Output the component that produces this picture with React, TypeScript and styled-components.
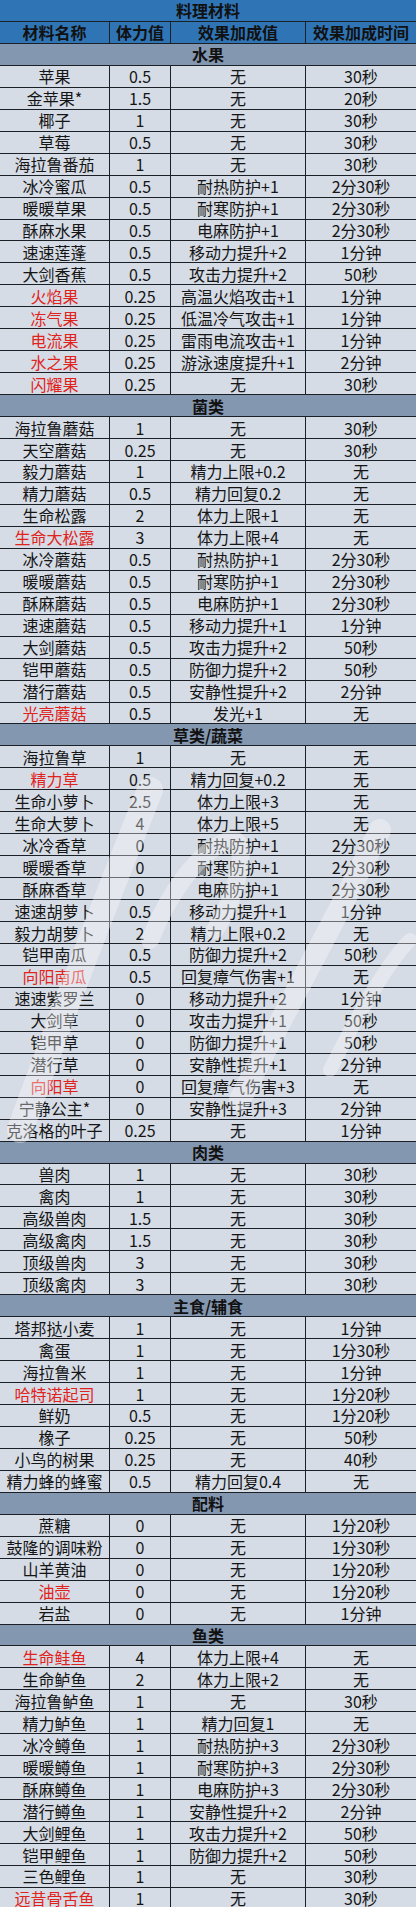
import React from "react";
import styled, { createGlobalStyle } from "styled-components";

type Item = [string, string, string, string, boolean?];
type Group = { title: string; items: Item[] };

const groups: Group[] = [
  {
    title: "水果",
    items: [
      ["苹果", "0.5", "无", "30秒"],
      ["金苹果*", "1.5", "无", "20秒"],
      ["椰子", "1", "无", "30秒"],
      ["草莓", "0.5", "无", "30秒"],
      ["海拉鲁番茄", "1", "无", "30秒"],
      ["冰冷蜜瓜", "0.5", "耐热防护+1", "2分30秒"],
      ["暖暖草果", "0.5", "耐寒防护+1", "2分30秒"],
      ["酥麻水果", "0.5", "电麻防护+1", "2分30秒"],
      ["速速莲蓬", "0.5", "移动力提升+2", "1分钟"],
      ["大剑香蕉", "0.5", "攻击力提升+2", "50秒"],
      ["火焰果", "0.25", "高温火焰攻击+1", "1分钟", true],
      ["冻气果", "0.25", "低温冷气攻击+1", "1分钟", true],
      ["电流果", "0.25", "雷雨电流攻击+1", "1分钟", true],
      ["水之果", "0.25", "游泳速度提升+1", "2分钟", true],
      ["闪耀果", "0.25", "无", "30秒", true],
    ],
  },
  {
    title: "菌类",
    items: [
      ["海拉鲁蘑菇", "1", "无", "30秒"],
      ["天空蘑菇", "0.25", "无", "30秒"],
      ["毅力蘑菇", "1", "精力上限+0.2", "无"],
      ["精力蘑菇", "0.5", "精力回复0.2", "无"],
      ["生命松露", "2", "体力上限+1", "无"],
      ["生命大松露", "3", "体力上限+4", "无", true],
      ["冰冷蘑菇", "0.5", "耐热防护+1", "2分30秒"],
      ["暖暖蘑菇", "0.5", "耐寒防护+1", "2分30秒"],
      ["酥麻蘑菇", "0.5", "电麻防护+1", "2分30秒"],
      ["速速蘑菇", "0.5", "移动力提升+1", "1分钟"],
      ["大剑蘑菇", "0.5", "攻击力提升+2", "50秒"],
      ["铠甲蘑菇", "0.5", "防御力提升+2", "50秒"],
      ["潜行蘑菇", "0.5", "安静性提升+2", "2分钟"],
      ["光亮蘑菇", "0.5", "发光+1", "无", true],
    ],
  },
  {
    title: "草类/蔬菜",
    items: [
      ["海拉鲁草", "1", "无", "无"],
      ["精力草", "0.5", "精力回复+0.2", "无", true],
      ["生命小萝卜", "2.5", "体力上限+3", "无"],
      ["生命大萝卜", "4", "体力上限+5", "无"],
      ["冰冷香草", "0", "耐热防护+1", "2分30秒"],
      ["暖暖香草", "0", "耐寒防护+1", "2分30秒"],
      ["酥麻香草", "0", "电麻防护+1", "2分30秒"],
      ["速速胡萝卜", "0.5", "移动力提升+1", "1分钟"],
      ["毅力胡萝卜", "2", "精力上限+0.2", "无"],
      ["铠甲南瓜", "0.5", "防御力提升+2", "50秒"],
      ["向阳南瓜", "0.5", "回复瘴气伤害+1", "无", true],
      ["速速紫罗兰", "0", "移动力提升+2", "1分钟"],
      ["大剑草", "0", "攻击力提升+1", "50秒"],
      ["铠甲草", "0", "防御力提升+1", "50秒"],
      ["潜行草", "0", "安静性提升+1", "2分钟"],
      ["向阳草", "0", "回复瘴气伤害+3", "无", true],
      ["宁静公主*", "0", "安静性提升+3", "2分钟"],
      ["克洛格的叶子", "0.25", "无", "1分钟"],
    ],
  },
  {
    title: "肉类",
    items: [
      ["兽肉", "1", "无", "30秒"],
      ["禽肉", "1", "无", "30秒"],
      ["高级兽肉", "1.5", "无", "30秒"],
      ["高级禽肉", "1.5", "无", "30秒"],
      ["顶级兽肉", "3", "无", "30秒"],
      ["顶级禽肉", "3", "无", "30秒"],
    ],
  },
  {
    title: "主食/辅食",
    items: [
      ["塔邦挞小麦", "1", "无", "1分钟"],
      ["禽蛋", "1", "无", "1分30秒"],
      ["海拉鲁米", "1", "无", "1分钟"],
      ["哈特诺起司", "1", "无", "1分20秒", true],
      ["鲜奶", "0.5", "无", "1分20秒"],
      ["橡子", "0.25", "无", "50秒"],
      ["小鸟的树果", "0.25", "无", "40秒"],
      ["精力蜂的蜂蜜", "0.5", "精力回复0.4", "无"],
    ],
  },
  {
    title: "配料",
    items: [
      ["蔗糖", "0", "无", "1分20秒"],
      ["鼓隆的调味粉", "0", "无", "1分30秒"],
      ["山羊黄油", "0", "无", "1分20秒"],
      ["油壶", "0", "无", "1分20秒", true],
      ["岩盐", "0", "无", "1分钟"],
    ],
  },
  {
    title: "鱼类",
    items: [
      ["生命鲑鱼", "4", "体力上限+4", "无", true],
      ["生命鲈鱼", "2", "体力上限+2", "无"],
      ["海拉鲁鲈鱼", "1", "无", "30秒"],
      ["精力鲈鱼", "1", "精力回复1", "无"],
      ["冰冷鳟鱼", "1", "耐热防护+3", "2分30秒"],
      ["暖暖鳟鱼", "1", "耐寒防护+3", "2分30秒"],
      ["酥麻鳟鱼", "1", "电麻防护+3", "2分30秒"],
      ["潜行鳟鱼", "1", "安静性提升+2", "2分钟"],
      ["大剑鲤鱼", "1", "攻击力提升+2", "50秒"],
      ["铠甲鲤鱼", "1", "防御力提升+2", "50秒"],
      ["三色鲤鱼", "1", "无", "30秒"],
      ["远昔骨舌鱼", "1", "无", "30秒", true],
    ],
  },
];

const GlobalStyle = createGlobalStyle`
  html, body {
    margin: 0;
    padding: 0;
    background: #d9dfe7;
  }
  body {
    font-family: "Noto Sans CJK SC", "Noto Sans", sans-serif;
  }
`;

export default function App() {
  return (
    <>
      <GlobalStyle />
      <Page>
        <Sheet>
          <Title>料理材料</Title>
          <HeadCell>材料名称</HeadCell>
          <HeadCell>体力值</HeadCell>
          <HeadCell>效果加成值</HeadCell>
          <HeadCell $last>效果加成时间</HeadCell>
          {groups.map((g) => (
            <React.Fragment key={g.title}>
              <Category>{g.title}</Category>
              {g.items.map(([name, hp, effect, time, red]) => (
                <React.Fragment key={name}>
                  <Cell $red={red}>{name}</Cell>
                  <Cell>{hp}</Cell>
                  <Cell>{effect}</Cell>
                  <Cell $last>{time}</Cell>
                </React.Fragment>
              ))}
            </React.Fragment>
          ))}
        </Sheet>
        <Watermark viewBox="0 0 416 380" aria-hidden="true">
          <path
            d="M20 360 C 60 250, 110 120, 150 20"
            stroke="#ffffff"
            strokeWidth="26"
            strokeLinecap="round"
            fill="none"
          />
          <path
            d="M150 170 C 170 120, 200 80, 230 70 C 250 66, 240 120, 215 160"
            stroke="#ffffff"
            strokeWidth="18"
            strokeLinecap="round"
            fill="none"
          />
          <path
            d="M240 330 C 280 250, 330 160, 380 60"
            stroke="#ffffff"
            strokeWidth="22"
            strokeLinecap="round"
            fill="none"
          />
          <path
            d="M330 300 C 360 240, 390 190, 410 170"
            stroke="#ffffff"
            strokeWidth="14"
            strokeLinecap="round"
            fill="none"
          />
        </Watermark>
      </Page>
    </>
  );
}

const Page = styled.div`
  position: relative;
  width: 416px;
  height: 1907px;
  overflow: hidden;
`;

const Sheet = styled.div`
  display: grid;
  grid-template-columns: 110px 61px 135px 110px;
  grid-auto-rows: 21.96px;
  width: 416px;
`;

const BaseCell = styled.div<{ $last?: boolean }>`
  box-sizing: border-box;
  display: flex;
  align-items: center;
  justify-content: center;
  border-bottom: 1px solid #1b1f26;
  border-right: ${(p) => (p.$last ? "none" : "1px solid #1b1f26")};
  white-space: nowrap;
  line-height: 20px;
  font-size: 16px;
`;

const Title = styled(BaseCell)`
  grid-column: 1 / -1;
  background: #2f75b6;
  color: #111;
  font-weight: 700;
  border-right: none;
`;

const HeadCell = styled(BaseCell)`
  background: #2f75b6;
  color: #111;
  font-weight: 700;
`;

const Category = styled(BaseCell)`
  grid-column: 1 / -1;
  background: #8497b0;
  color: #111;
  font-weight: 700;
  border-right: none;
`;

const Cell = styled(BaseCell)<{ $red?: boolean }>`
  background: #d6dce5;
  color: ${(p) => (p.$red ? "#e0231c" : "#151515")};
`;

const Watermark = styled.svg`
  position: absolute;
  left: 0;
  top: 770px;
  width: 416px;
  height: 380px;
  opacity: 0.35;
  pointer-events: none;
`;
